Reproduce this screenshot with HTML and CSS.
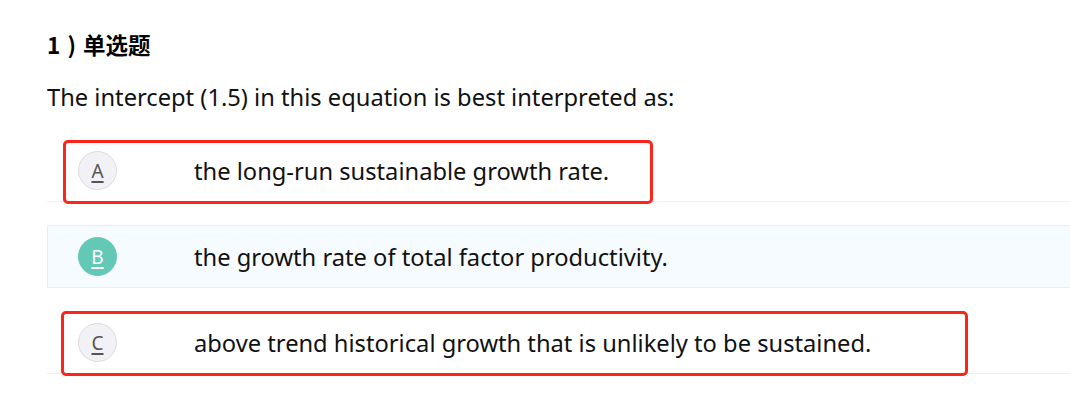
FILE: index.html
```html
<!DOCTYPE html>
<html lang="zh">
<head>
<meta charset="utf-8">
<title>单选题</title>
<link rel="stylesheet" href="styles.css">
</head>
<body>
<div class="question">
  <h2 class="q-title">1 ) 单选题</h2>
  <p class="q-text">The intercept (1.5) in this equation is best interpreted as:</p>
  <div class="options">
    <div class="option">
      <span class="badge"><u>A</u></span>
      <span class="opt-text">the long-run sustainable growth rate.</span>
      <span class="mark mark-a"></span>
    </div>
    <div class="option selected">
      <span class="badge"><u>B</u></span>
      <span class="opt-text">the growth rate of total factor productivity.</span>
    </div>
    <div class="option">
      <span class="badge"><u>C</u></span>
      <span class="opt-text">above trend historical growth that is unlikely to be sustained.</span>
      <span class="mark mark-c"></span>
    </div>
  </div>
</div>
</body>
</html>
```
FILE: styles.css
```css
html, body {
  margin: 0;
  padding: 0;
  background: #ffffff;
}
body {
  font-family: "Noto Sans", "Noto Sans CJK SC", sans-serif;
  color: #111;
}
.question {
  padding: 31px 0 44px 47px;
}
.q-title {
  margin: 0;
  font-family: "Noto Sans CJK SC", "Noto Sans", sans-serif;
  font-size: 22.5px;
  font-weight: 700;
  line-height: 26px;
  color: #000;
  word-spacing: 2px;
}
.q-text {
  margin: 25px 0 0 0;
  font-size: 23.7px;
  line-height: 30px;
  color: #111;
}
.options {
  margin-top: 27px;
  display: flex;
  flex-direction: column;
  gap: 23px;
}
.option {
  position: relative;
  height: 61px;
  display: flex;
  align-items: center;
  border-top: 1px solid transparent;
  border-bottom: 1px solid #f0f0f0;
}
.option.selected {
  background: #f6fbff;
  border: 1px solid #e4eff8;
  border-right: 0;
}
.badge {
  box-sizing: border-box;
  width: 39px;
  height: 39px;
  margin-left: 31px;
  border-radius: 50%;
  background: #f2f1f6;
  border: 1px solid #dcdce2;
  display: flex;
  align-items: center;
  justify-content: center;
  font-size: 19px;
  color: #555;
  flex: none;
}
.badge u {
  text-decoration-thickness: 2px;
  text-underline-offset: 3px;
}
.selected .badge {
  margin-left: 30px;
  background: #64c8b6;
  border-color: #64c8b6;
  color: #fff;
}
.opt-text {
  margin-left: 77px;
  font-size: 23.7px;
  line-height: 30px;
  color: #111;
}
.mark {
  position: absolute;
  box-sizing: border-box;
  border: 3px solid #ff2419;
  border-radius: 5px;
  pointer-events: none;
  z-index: 2;
}
.mark-a {
  left: 16px;
  top: 0px;
  width: 590px;
  height: 64px;
}
.mark-c {
  left: 14px;
  top: -1px;
  width: 907px;
  height: 65px;
}
```
